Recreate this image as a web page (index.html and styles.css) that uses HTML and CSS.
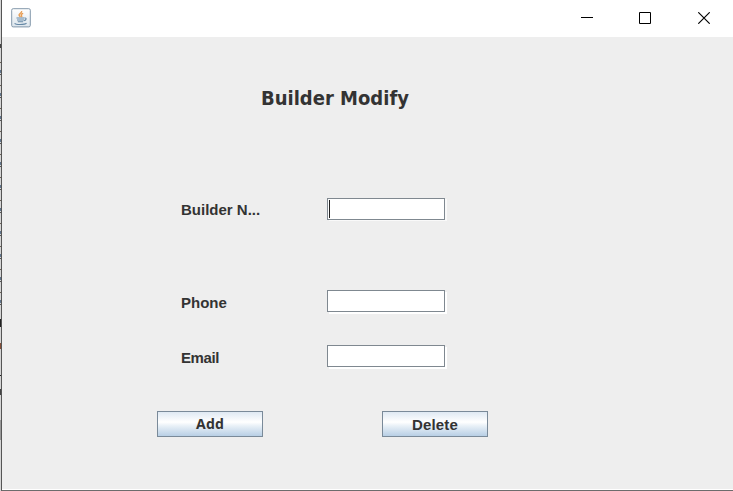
FILE: index.html
```
<!DOCTYPE html>
<html lang="en">
<head>
<meta charset="utf-8">
<title>Builder Modify</title>
<link rel="stylesheet" href="styles.css">
</head>
<body>
<div class="window">
  <header class="titlebar">
    <svg class="java" width="20" height="20" viewBox="0 0 20 20" fill="none">
      <defs><linearGradient id="tile" x1="0" y1="0" x2="0" y2="1"><stop stop-color="#fff"/><stop offset="1" stop-color="#dce5ec"/></linearGradient></defs>
      <rect x=".7" y=".7" width="18.6" height="18.2" rx="1.5" fill="url(#tile)" stroke="#8398aa"/>
      <path d="M10.6 3c.8 2-3.2 2.5-2.5 4.3.2.7 1 1 1.3 1.7M12.2 5.3c-2 .6-2.6 1.4-1.6 2.4.4.5.2.9-.3 1.4" stroke="#e89b50" stroke-width="1.4"/>
      <path d="M5.5 10h7.7M6 12h7M6.8 13.8h5.4M13.5 10c2.2-.5 2.2 2-.4 2.6M4 15.2c-.5 1.8 10 1.8 11.5 0" stroke="#6588a5" stroke-width="1.1"/>
    </svg>
    <div class="controls">
      <svg width="12" height="12"><path d="M0 5.5h12" stroke="#000"/></svg>
      <svg width="12" height="12"><path d="M.5.5h11v11H.5z" fill="none" stroke="#000"/></svg>
      <svg class="close" width="12" height="12"><path d="M.3.3l11.4 11.4M11.7.3L.3 11.7" stroke="#000" stroke-width="1.15"/></svg>
    </div>
  </header>
  <main class="form">
    <h1 class="heading">Builder Modify</h1>
    <div class="row row-name"><span class="label">Builder N...</span><div class="field"><i class="caret"></i></div></div>
    <div class="row row-phone"><span class="label">Phone</span><div class="field"></div></div>
    <div class="row row-email"><span class="label">Email</span><div class="field"></div></div>
    <div class="actions"><button class="button button-add">Add</button><button class="button">Delete</button></div>
  </main>
</div>
</body>
</html>
```
FILE: styles.css
```
* { box-sizing: border-box; }
body {
  margin: 0;
  height: 491px;
  padding-left: 1px;
  overflow: hidden;
  color: #333;
  font-family: "Liberation Sans", sans-serif;
  background:
    linear-gradient(#444, #444) 0 44px / 1px 4px no-repeat,
    linear-gradient(#222, #222) 0 319px / 1px 8px no-repeat,
    linear-gradient(#854f38, #854f38) 0 343px / 1px 6px no-repeat,
    linear-gradient(#222, #222) 0 375px / 1px 1px no-repeat,
    linear-gradient(#444, #444) 0 389px / 1px 6px no-repeat,
    linear-gradient(#999, #999) 0 420px / 1px 20px no-repeat,
    repeating-linear-gradient(#d5d5d5 0 9px, #6b6257 9px 10px, #d5d5d5 10px 17px, #61758c 17px 20px, #d5d5d5 20px 21px, #555 21px 22px, #d5d5d5 22px 23px) 0 53px / 1px 253px no-repeat,
    #d5d5d5;
}
.window {
  height: 491px;
  border-left: 1px solid #555;
  border-bottom: 1px solid #6c6c6c;
  background: #eee;
  box-shadow: inset 0 -1px #fff;
}
.titlebar {
  display: flex;
  justify-content: space-between;
  height: 37px;
  padding: 8px 23px 0 9px;
  background: #fff;
}
.controls { display: flex; gap: 46px; padding-top: 4px; }
.controls svg { display: block; }
.controls .close { margin-left: 1px; }
.form { display: flow-root; }
.heading {
  width: max-content;
  height: 28px;
  margin: 47px 0 0 259px;
  font: bold 20px/28px "DejaVu Sans Condensed", "DejaVu Sans", sans-serif;
  font-stretch: condensed;
  white-space: nowrap;
}
.row {
  display: grid;
  grid-template-columns: 146px 118px;
  height: 22px;
  padding-left: 179px;
}
.row-name { margin-top: 86px; }
.row-phone { margin-top: 70px; }
.row-email { margin-top: 33px; }
.label { font-size: 15px; font-weight: bold; line-height: 24px; }
.row-phone .label, .row-email .label { line-height: 26px; }
.row-email .label { letter-spacing: -.4px; }
.field {
  width: 118px;
  height: 22px;
  padding: 1px;
  border: 1px solid #7f8890;
  background: #fff;
  box-shadow: 2px 2px #fff;
}
.row-name .field { box-shadow: 2px 1px #f9f9f9; }
.caret { display: block; width: 1px; height: 18px; background: #222; }
.actions {
  display: flex;
  gap: 119px;
  margin-top: 44px;
  padding-left: 155px;
}
.button {
  width: 106px;
  height: 26px;
  padding: 1px 0 0;
  border: 1px solid #7a8a99;
  border-radius: 0;
  color: #333;
  background: linear-gradient(#dfe9f3, #fff 42%, #e8f0f7 58%, #b8cfe5);
  font: bold 15px/22px "Liberation Sans", sans-serif;
  letter-spacing: .2px;
}
.button-add {
  padding: 0 0 1px;
  font-family: "Noto Sans", sans-serif;
  font-size: 14px;
}
```
